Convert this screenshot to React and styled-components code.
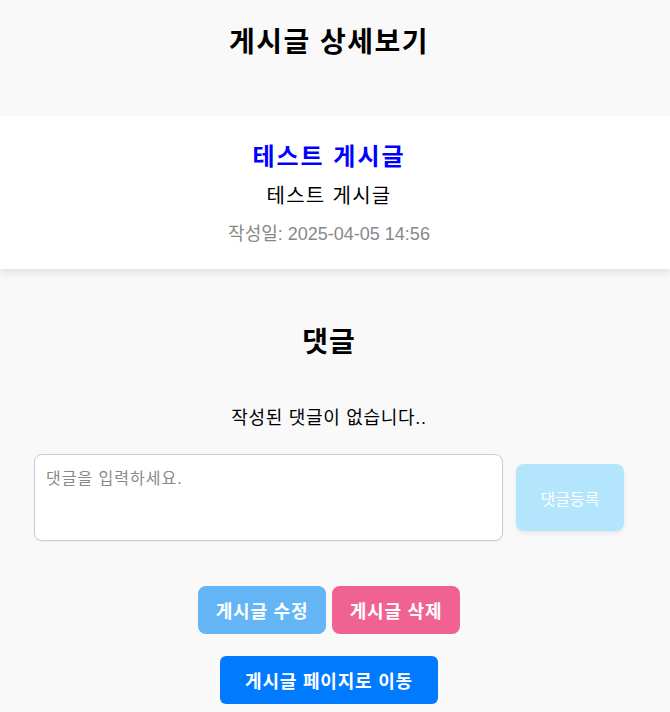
import React, { useState } from "react";
import styled, { createGlobalStyle } from "styled-components";

const GlobalStyle = createGlobalStyle`
  body {
    margin: 0;
    background: #f9f9f9;
    font-family: "Liberation Sans", "Noto Sans CJK KR", sans-serif;
  }
`;

function App() {
  const [comment, setComment] = useState("");

  return (
    <Page>
      <GlobalStyle />
      <PageTitle>게시글 상세보기</PageTitle>

      <PostCard>
        <PostTitle>테스트 게시글</PostTitle>
        <PostBody>테스트 게시글</PostBody>
        <PostDate>작성일: 2025-04-05 14:56</PostDate>
      </PostCard>

      <CommentTitle>댓글</CommentTitle>
      <EmptyText>작성된 댓글이 없습니다..</EmptyText>

      <CommentForm>
        <CommentInput
          placeholder="댓글을 입력하세요."
          value={comment}
          onChange={(e) => setComment(e.target.value)}
        />
        <SubmitButton disabled={!comment}>댓글등록</SubmitButton>
      </CommentForm>

      <ActionRow>
        <ActionButton $bg="#64b5f6">게시글 수정</ActionButton>
        <ActionButton $bg="#f06292">게시글 삭제</ActionButton>
      </ActionRow>

      <ActionRow>
        <ActionButton $bg="#007bff" $wide>
          게시글 페이지로 이동
        </ActionButton>
      </ActionRow>
    </Page>
  );
}

export default App;

// --- STYLES ---

const Page = styled.div`
  display: flex;
  flex-direction: column;
  align-items: center;
  padding: 23px 12px 8px 0;
  text-align: center;
`;

const PageTitle = styled.h1`
  margin: 0 0 53px;
  font-size: 28px;
  line-height: 40px;
  font-weight: bold;
  letter-spacing: 1.5px;
  color: #000;
`;

const PostCard = styled.section`
  align-self: stretch;
  margin-right: -12px;
  padding: 26px 12px 23px 0;
  background: #fff;
  box-shadow: 0 4px 8px rgba(0, 0, 0, 0.1);
  display: flex;
  flex-direction: column;
  align-items: center;
`;

const PostTitle = styled.h2`
  margin: 0 0 12px;
  font-size: 24px;
  line-height: 30px;
  font-weight: bold;
  letter-spacing: 2px;
  color: #0000ff;
`;

const PostBody = styled.p`
  margin: 0 0 14px;
  font-size: 20px;
  line-height: 24px;
  letter-spacing: 1.3px;
  color: #000;
`;

const PostDate = styled.p`
  margin: 0;
  font-size: 18px;
  line-height: 24px;
  color: #888;
`;

const CommentTitle = styled.h2`
  margin: 54px 0 42px;
  font-size: 28px;
  line-height: 40px;
  font-weight: bold;
  letter-spacing: 1px;
`;

const EmptyText = styled.p`
  margin: 0 0 23px;
  font-size: 18px;
  line-height: 26px;
  letter-spacing: 0.7px;
  color: #000;
`;

const CommentForm = styled.div`
  align-self: stretch;
  display: flex;
  align-items: center;
  gap: 13px;
  padding-left: 34px;
`;

const CommentInput = styled.textarea`
  box-sizing: border-box;
  width: 469px;
  height: 87px;
  padding: 10px 11px;
  border: 1px solid #ccc;
  border-radius: 8px;
  background: #fff;
  font-family: "Liberation Sans", "Noto Sans CJK KR", sans-serif;
  font-size: 16px;
  letter-spacing: 1px;
  resize: none;
  box-shadow: 0 1px 2px rgba(0, 0, 0, 0.05);
  &::placeholder {
    color: #888;
  }
`;

const SubmitButton = styled.button`
  width: 108px;
  height: 67px;
  border: none;
  border-radius: 8px;
  background: ${(props) => (props.disabled ? "#b3e5fc" : "#29b6f6")};
  color: #fff;
  font-family: "Liberation Sans", "Noto Sans CJK KR", sans-serif;
  font-size: 16px;
  box-shadow: 0 2px 4px rgba(0, 0, 0, 0.08);
  cursor: pointer;
`;

const ActionRow = styled.div`
  display: flex;
  justify-content: center;
  gap: 6px;
  margin-top: 45px;
  & + & {
    margin-top: 22px;
  }
`;

const ActionButton = styled.button`
  width: ${(props) => (props.$wide ? "218px" : "128px")};
  height: 48px;
  border: none;
  border-radius: ${(props) => (props.$wide ? "6px" : "8px")};
  background: ${(props) => props.$bg};
  color: #fff;
  font-family: "Liberation Sans", "Noto Sans CJK KR", sans-serif;
  font-size: 18px;
  font-weight: bold;
  letter-spacing: 0.8px;
  cursor: pointer;
`;
